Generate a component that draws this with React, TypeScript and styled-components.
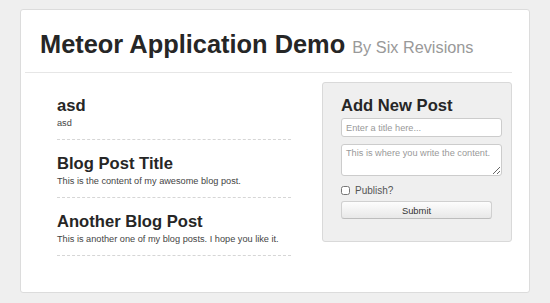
import React from 'react';
import styled, {createGlobalStyle} from 'styled-components';

const GlobalStyle = createGlobalStyle`
  html, body {
    margin: 0;
    padding: 0;
    background: #efefef;
    font-family: "Liberation Sans", Arial, sans-serif;
  }
`

const Page = styled.div`
  width: 550px;
  height: 303px;
  box-sizing: border-box;
  padding: 9px 20px 10px 20px;
`
const Card = styled.div`
  box-sizing: border-box;
  height: 284px;
  background: #fff;
  border: 1px solid #dcdcdc;
  border-radius: 3px;
  padding: 0 17px 0 4px;
`
const Header = styled.header`
  border-bottom: 1px solid #e6e6e6;
  padding: 20px 0 11px 15px;
`
const Title = styled.h1`
  margin: 0;
  font-size: 25.4px;
  line-height: 28px;
  font-weight: bold;
  color: #262626;
  small {
    font-size: 16.3px;
    font-weight: normal;
    color: #999;
  }
`
const Body = styled.div`
  display: flex;
  gap: 31px;
  padding: 9px 0 0 32px;
`
const Posts = styled.div`
  width: 234px;
`
const Post = styled.article`
  border-bottom: 1px dashed #d6d6d6;
  padding-top: 14px;
  height: 43px;
`
const PostTitle = styled.h2`
  margin: 0;
  font-size: 16.6px;
  line-height: 20px;
  font-weight: bold;
  color: #262626;
`
const PostText = styled.p`
  margin: 1px 0 0;
  font-size: 9.2px;
  line-height: 13px;
  color: #444;
`
const Panel = styled.form`
  box-sizing: border-box;
  width: 190px;
  height: 160px;
  background: #efefef;
  border: 1px solid #d9d9d9;
  border-radius: 3px;
  padding: 13px 9px 0 18px;
  display: flex;
  flex-direction: column;
`
const PanelTitle = styled(PostTitle)`
  margin-bottom: 2px;
`
const Field = styled.input`
  box-sizing: border-box;
  width: 161px;
  height: 19px;
  border: 1px solid #ccc;
  border-radius: 3px;
  background: #fff;
  padding: 0 4px;
  font-family: inherit;
  font-size: 9.2px;
  &::placeholder { color: #999; }
`
const Area = styled.textarea`
  box-sizing: border-box;
  width: 161px;
  height: 32px;
  margin-top: 7px;
  border: 1px solid #ccc;
  border-radius: 3px;
  background: #fff;
  padding: 3px 4px;
  font-family: inherit;
  font-size: 9.2px;
  resize: vertical;
  &::placeholder { color: #999; }
`
const Check = styled.label`
  display: flex;
  align-items: center;
  gap: 5px;
  margin-top: 9px;
  font-size: 10px;
  color: #555;
  input {
    margin: 0;
    width: 9px;
    height: 9px;
  }
`
const Submit = styled.button`
  box-sizing: border-box;
  width: 151px;
  height: 18px;
  margin-top: 5px;
  border: 1px solid #d0d0d0;
  border-bottom-color: #bdbdbd;
  border-radius: 3px;
  background: linear-gradient(#fdfdfd, #e8e8e8);
  font-family: inherit;
  font-size: 9.4px;
  color: #333;
  padding: 0;
`

const posts = [
    {title: 'asd', text: 'asd'},
    {title: 'Blog Post Title', text: 'This is the content of my awesome blog post.'},
    {title: 'Another Blog Post', text: 'This is another one of my blog posts. I hope you like it.'},
]

const App = () => {
    return (
        <Page>
            <GlobalStyle/>
            <Card>
                <Header>
                    <Title>Meteor Application Demo <small>By Six Revisions</small></Title>
                </Header>
                <Body>
                    <Posts>
                        {posts.map(p => (
                            <Post key={p.title}>
                                <PostTitle>{p.title}</PostTitle>
                                <PostText>{p.text}</PostText>
                            </Post>
                        ))}
                    </Posts>
                    <Panel onSubmit={e => e.preventDefault()}>
                        <PanelTitle>Add New Post</PanelTitle>
                        <Field placeholder="Enter a title here..."/>
                        <Area placeholder="This is where you write the content."/>
                        <Check><input type="checkbox"/>Publish?</Check>
                        <Submit type="submit">Submit</Submit>
                    </Panel>
                </Body>
            </Card>
        </Page>
    )
}

export default App;
